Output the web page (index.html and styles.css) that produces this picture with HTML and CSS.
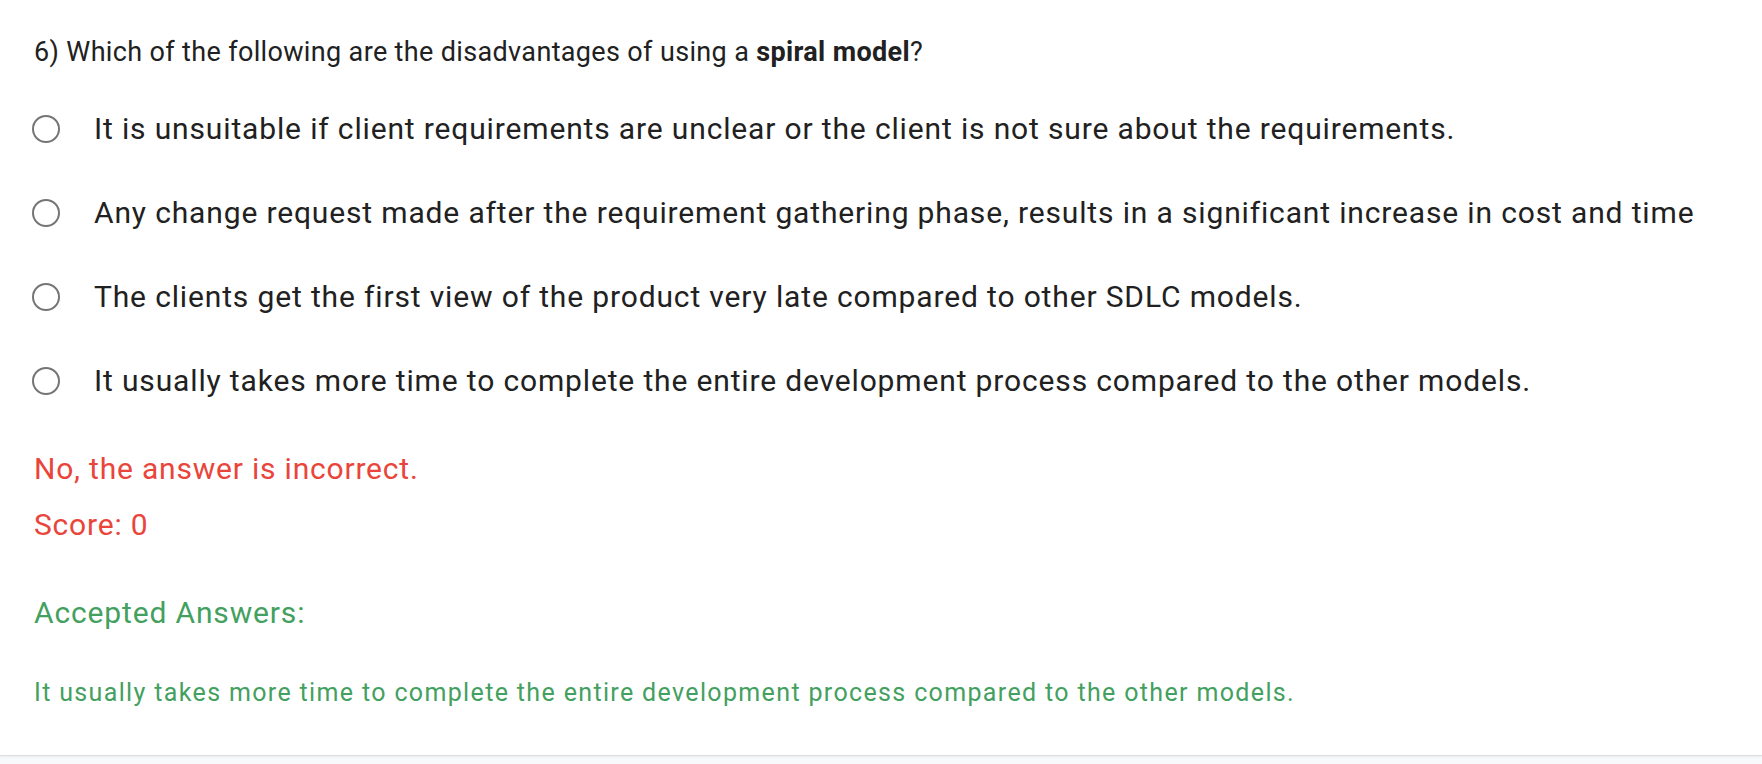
FILE: index.html
```html
<!DOCTYPE html>
<html lang="en">
<head>
<meta charset="utf-8">
<title>Question 6</title>
<link rel="stylesheet" href="styles.css">
</head>
<body>
<div class="card">
  <div class="question">6) Which of the following are the disadvantages of using a <b>spiral model</b>?</div>
  <div class="options">
    <div class="option"><span class="radio"></span><span class="label">It is unsuitable if client requirements are unclear or the client is not sure about the requirements.</span></div>
    <div class="option"><span class="radio"></span><span class="label">Any change request made after the requirement gathering phase, results in a significant increase in cost and time</span></div>
    <div class="option"><span class="radio"></span><span class="label">The clients get the first view of the product very late compared to other SDLC models.</span></div>
    <div class="option"><span class="radio"></span><span class="label">It usually takes more time to complete the entire development process compared to the other models.</span></div>
  </div>
  <div class="result incorrect">No, the answer is incorrect.</div>
  <div class="result score">Score: 0</div>
  <div class="accepted-title">Accepted Answers:</div>
  <div class="accepted-answer">It usually takes more time to complete the entire development process compared to the other models.</div>
</div>
<div class="below"></div>
</body>
</html>
```

FILE: styles.css
```css
html, body {
  margin: 0;
  padding: 0;
  background: #f8f9fa;
  font-family: Roboto, "Liberation Sans", Arial, sans-serif;
  color: #212121;
}

.card {
  background: #ffffff;
  padding: 34px 0 45px 34px;
  border-bottom: 1px solid #dedede;
  box-shadow: 0 1px 2px rgba(0, 0, 0, 0.06);
}

.question {
  font-size: 27px;
  line-height: 36px;
  letter-spacing: 0.35px;
}

.question b {
  font-weight: 700;
}

.options {
  margin-top: 39px;
  display: flex;
  flex-direction: column;
  gap: 44px;
}

.option {
  display: flex;
  align-items: center;
  height: 40px;
}

.radio {
  box-sizing: border-box;
  width: 28px;
  height: 28px;
  border: 2px solid #757575;
  border-radius: 50%;
  margin-left: -2px;
  margin-right: 34px;
  flex: none;
}

.label {
  font-size: 30px;
  line-height: 40px;
  letter-spacing: 0.85px;
  white-space: nowrap;
}

.result {
  color: #e9453b;
  font-size: 30px;
  line-height: 40px;
  letter-spacing: 0.8px;
}

.incorrect {
  margin-top: 48px;
}

.score {
  margin-top: 16px;
}

.accepted-title {
  margin-top: 48px;
  color: #43a05f;
  font-size: 30px;
  line-height: 40px;
  letter-spacing: 0.85px;
}

.accepted-answer {
  margin-top: 43px;
  color: #43a05f;
  font-size: 25px;
  line-height: 34px;
  letter-spacing: 1.35px;
}

.below {
  height: 40px;
}
```
